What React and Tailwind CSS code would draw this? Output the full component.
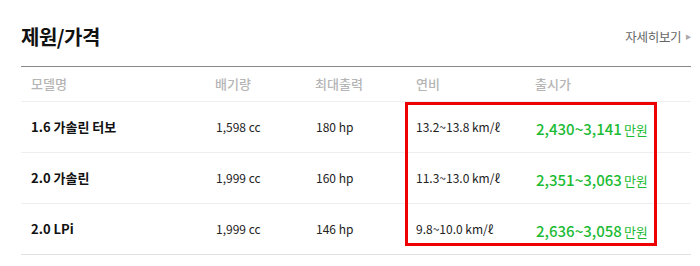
import React from "react";

const rows = [
  { name: "1.6 가솔린 터보", cc: "1,598", hp: "180", eff: "13.2~13.8", price: "2,430~3,141" },
  { name: "2.0 가솔린", cc: "1,999", hp: "160", eff: "11.3~13.0", price: "2,351~3,063" },
  { name: "2.0 LPi", cc: "1,999", hp: "146", eff: "9.8~10.0", price: "2,636~3,058" },
];

const font = { fontFamily: '"Noto Sans CJK KR", "Noto Sans", sans-serif' };

export default function App() {
  return (
    <div className="w-[700px] h-[266px] bg-white relative overflow-hidden" style={font}>
      <div className="pl-[21px] w-[691px]">
        <div className="flex items-end justify-between h-[66px] pb-[14px]">
          <h2 className="text-[20px] leading-[30px] font-bold text-[#111] tracking-[-0.5px]">제원/가격</h2>
          <a className="flex items-center text-[12.5px] leading-[20px] text-[#666] mb-[5px] tracking-[-0.3px]">
            자세히보기
            <span className="ml-[4px] text-[6px] text-[#aaa]">▶</span>
          </a>
        </div>
        <div className="border-t border-[#888]">
          <div className="grid grid-cols-[184px_100px_101px_119px_1fr] pl-[10px] h-[35px] items-center border-b border-[#eeeeee] text-[13px] font-medium text-[#b5b5b5]">
            <div>모델명</div>
            <div>배기량</div>
            <div>최대출력</div>
            <div>연비</div>
            <div>출시가</div>
          </div>
          {rows.map((r, i) => (
            <div
              key={i}
              className={`grid grid-cols-[184px_100px_101px_119px_1fr] pl-[10px] h-[51px] items-center border-b ${i === 2 ? "border-[#e2e2e2]" : "border-[#eeeeee]"}`}
            >
              <div className="text-[13px] font-bold text-[#111]">{r.name}</div>
              <div className="text-[12px] text-[#222] pl-[1px]">{r.cc} cc</div>
              <div className="text-[12px] text-[#222] pl-[1px]">{r.hp} hp</div>
              <div className="text-[12px] text-[#222]">{r.eff} km/ℓ</div>
              <div className="text-[#1cbb34] pl-[1px] pt-[2px]">
                <span className="text-[15px] font-medium">{r.price}</span>
                <span className="text-[13px] ml-[2px]">만원</span>
              </div>
            </div>
          ))}
        </div>
      </div>
      <div className="absolute left-[405px] top-[102px] w-[252px] h-[144px] border-[3px] border-[#ee0000] pointer-events-none" />
    </div>
  );
}
